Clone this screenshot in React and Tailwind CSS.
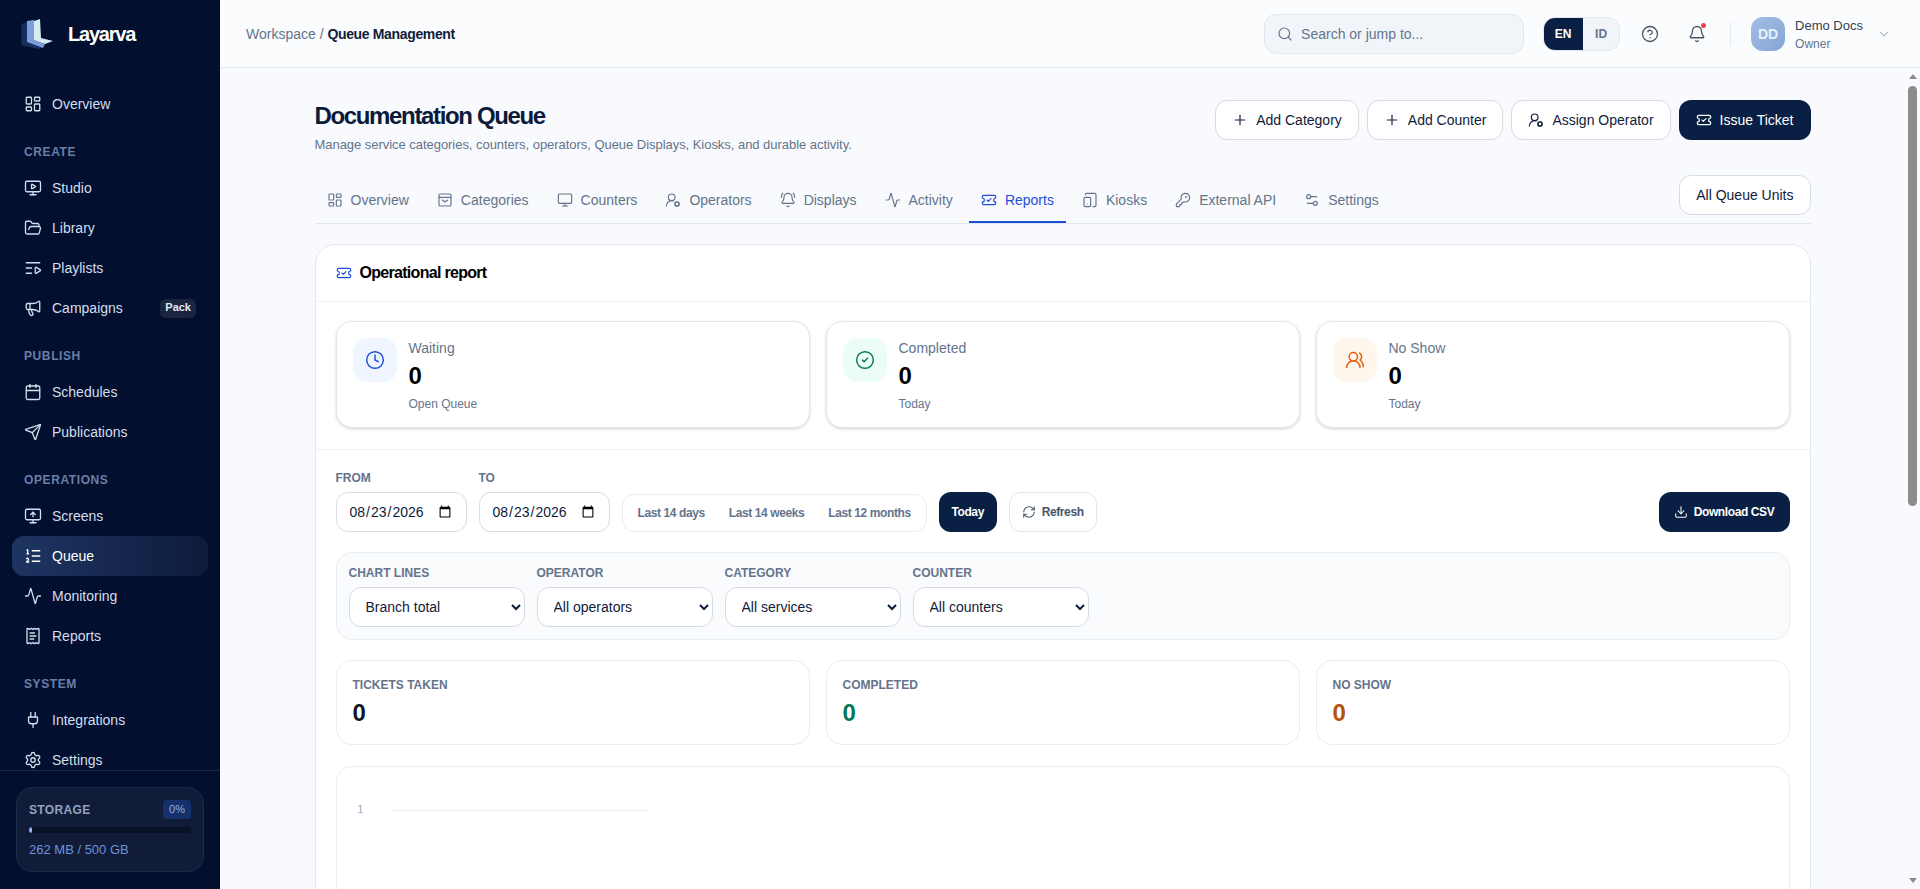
import React from 'react';
import {
  LayoutDashboard, MonitorPlay, FolderOpen, ListVideo, Megaphone, Calendar, Send, MonitorUp, ListOrdered,
  Activity, ReceiptText, Plug, Settings, Search, CircleHelp, Bell, ChevronDown, Plus, UserRoundCog, TicketCheck,
  Monitor, BellRing, TabletSmartphone, KeyRound, Settings2, Clock, CircleCheck, UsersRound, RefreshCw, Download,
} from 'lucide-react';

const CategoriesIcon = (props) => (
  <svg viewBox="0 0 24 24" fill="none" stroke="currentColor" strokeWidth="2" strokeLinecap="round" strokeLinejoin="round" {...props}>
    <rect x="3" y="3" width="18" height="18" rx="2" />
    <path d="M3 8h18" />
    <path d="M8 12l4 3 4-3" />
  </svg>
);

const navGroups = [
  { items: [{ label: 'Overview', icon: LayoutDashboard }] },
  {
    title: 'CREATE',
    items: [
      { label: 'Studio', icon: MonitorPlay },
      { label: 'Library', icon: FolderOpen },
      { label: 'Playlists', icon: ListVideo },
      { label: 'Campaigns', icon: Megaphone, badge: 'Pack' },
    ],
  },
  {
    title: 'PUBLISH',
    items: [
      { label: 'Schedules', icon: Calendar },
      { label: 'Publications', icon: Send },
    ],
  },
  {
    title: 'OPERATIONS',
    items: [
      { label: 'Screens', icon: MonitorUp },
      { label: 'Queue', icon: ListOrdered, active: true },
      { label: 'Monitoring', icon: Activity },
      { label: 'Reports', icon: ReceiptText },
    ],
  },
  {
    title: 'SYSTEM',
    items: [
      { label: 'Integrations', icon: Plug },
      { label: 'Settings', icon: Settings },
    ],
  },
];

const tabs = [
  { label: 'Overview', icon: LayoutDashboard },
  { label: 'Categories', icon: CategoriesIcon },
  { label: 'Counters', icon: Monitor },
  { label: 'Operators', icon: UserRoundCog },
  { label: 'Displays', icon: BellRing },
  { label: 'Activity', icon: Activity },
  { label: 'Reports', icon: TicketCheck, active: true },
  { label: 'Kiosks', icon: TabletSmartphone },
  { label: 'External API', icon: KeyRound },
  { label: 'Settings', icon: Settings2 },
];

const Logo = () => (
  <svg viewBox="0 0 32 32" className="w-8 h-8 shrink-0">
    <polygon points="0.5,6 6,4 6,24 22,30 17,31 0.5,27" fill="#15305f" />
    <polygon points="6,3 13,2 13,22 24,26 22,30 6,24" fill="#7c9fd9" />
    <polygon points="13,3 19,1 20,20 32,23 24,26 13,22" fill="#d6ecf3" />
  </svg>
);

const Sidebar = () => (
  <aside className="w-[220px] shrink-0 h-full flex flex-col bg-[#020f2e]">
    <div className="h-[68px] shrink-0 flex items-center gap-[15px] pl-[21px]">
      <Logo />
      <span className="text-[20px] font-bold tracking-[-1.2px] text-white">Layarva</span>
    </div>
    <nav className="flex-1 min-h-0 overflow-hidden px-3 pt-4 flex flex-col gap-5">
      {navGroups.map((group, i) => (
        <div key={i}>
          {group.title && (
            <div className="h-4 mb-2 px-3 text-xs leading-4 font-bold tracking-[0.05em] text-[#6a7fa8]">{group.title}</div>
          )}
          {group.items.map((item) => (
            <div
              key={item.label}
              className={`h-10 px-3 flex items-center gap-2.5 rounded-xl text-sm ${
                item.active ? 'bg-gradient-to-r from-[#1e3563] to-[#0e1b3c] text-white' : 'text-[#d3deef]'
              }`}
            >
              <item.icon className="w-[18px] h-[18px] shrink-0" strokeWidth={1.75} />
              <span className="flex-1">{item.label}</span>
              {item.badge && (
                <span className="h-[19px] px-[5px] flex items-center rounded-md bg-[#1b2540] text-[11px] font-bold text-[#e2e8f0]">{item.badge}</span>
              )}
            </div>
          ))}
        </div>
      ))}
    </nav>
    <div className="shrink-0 border-t border-[#1c2a48] px-4 pt-4 pb-[17px]">
      <div className="h-[85px] rounded-2xl border border-[#1c2a4a] bg-[#101c38] px-3 pt-3">
        <div className="flex items-center justify-between">
          <span className="text-xs font-bold tracking-[0.03em] text-[#94a3bd]">STORAGE</span>
          <span className="h-[19px] px-1.5 flex items-center rounded bg-[#15306b] text-[11px] text-[#8fb0ee]">0%</span>
        </div>
        <div className="mt-2 h-1.5 rounded-full bg-[#0a1226] overflow-hidden">
          <div className="h-full w-[3px] rounded-full bg-[#8fb0ee]" />
        </div>
        <div className="mt-[9px] text-[13px] leading-4 text-[#6f93d9]">262 MB / 500 GB</div>
      </div>
    </div>
  </aside>
);

const Topbar = () => (
  <header className="h-[68px] shrink-0 border-b border-[#e2e8f0] bg-[#fbfcfe] flex items-center pl-[26px] pr-[29px]">
    <div className="text-sm text-[#64748b]">
      Workspace / <span className="font-semibold text-[#0f1c3a] tracking-tight">Queue Management</span>
    </div>
    <div className="ml-auto w-[260px] h-10 rounded-xl border border-[#e2e8f0] bg-[#f1f5f9] flex items-center gap-2 px-3 text-sm text-[#64748b]">
      <Search className="w-4 h-4 shrink-0" strokeWidth={1.75} />
      Search or jump to...
    </div>
    <div className="ml-[19px] h-[34px] flex rounded-xl overflow-hidden border border-[#e2e8f0] bg-[#f1f5f9] text-xs font-bold">
      <span className="w-10 -my-px -ml-px flex items-center justify-center bg-[#0a1f44] text-white">EN</span>
      <span className="w-9 flex items-center justify-center text-[#64748b]">ID</span>
    </div>
    <CircleHelp className="ml-[21px] w-[18px] h-[18px] text-[#475569]" strokeWidth={1.75} />
    <div className="relative ml-[29px]">
      <Bell className="w-[18px] h-[18px] text-[#475569]" strokeWidth={1.75} />
      <span className="absolute -top-0.5 right-0 w-[5px] h-[5px] rounded-full bg-[#ef4444]" />
    </div>
    <div className="ml-6 w-px h-6 bg-[#e2e8f0]" />
    <div className="ml-5 w-[34px] h-[34px] rounded-xl bg-gradient-to-br from-[#a3bde3] to-[#85a6d6] flex items-center justify-center text-sm font-bold text-[#e8f0fa]">DD</div>
    <div className="ml-2.5">
      <div className="text-[13px] leading-5 font-medium text-[#334155]">Demo Docs</div>
      <div className="text-xs leading-4 font-medium text-[#64748b]">Owner</div>
    </div>
    <ChevronDown className="ml-3.5 w-3.5 h-3.5 text-[#94a3b8]" strokeWidth={1.75} />
  </header>
);

const OutlineButton = ({ icon: Icon, label }) => (
  <button className="h-10 px-4 flex items-center gap-2 rounded-xl border border-[#d5dce6] bg-white text-sm text-[#0f1c3a]">
    {Icon && <Icon className="w-4 h-4" strokeWidth={1.75} />}
    {label}
  </button>
);

const StatCard = ({ icon: Icon, box, color, label, sub }) => (
  <div className="h-[107px] rounded-2xl border border-[#e2e8f0] bg-white shadow-[0_1px_3px_rgba(15,23,42,0.18)] p-4 flex gap-3">
    <div className={`w-11 h-11 rounded-[14px] shrink-0 flex items-center justify-center ${box}`}>
      <Icon className={`w-5 h-5 ${color}`} strokeWidth={1.75} />
    </div>
    <div>
      <div className="text-sm leading-5 text-[#64748b]">{label}</div>
      <div className="text-2xl leading-8 font-bold text-black mt-[2px]">0</div>
      <div className="text-xs leading-4 text-[#64748b] mt-1">{sub}</div>
    </div>
  </div>
);

const Field = ({ label, className, children }) => (
  <label className={`block ${className || ''}`}>
    <span className="block text-xs leading-4 font-semibold text-[#64748b] mb-1.5">{label}</span>
    {children}
  </label>
);

const selectClass = 'block w-[176px] h-10 rounded-xl border border-[#d5dce6] bg-white px-3 text-sm text-[#0f1c3a]';

const MiniStat = ({ label, color }) => (
  <div className="h-[85px] rounded-2xl border border-[#e8edf3] bg-white px-4 pt-4">
    <div className="text-xs leading-4 font-semibold text-[#64748b]">{label}</div>
    <div className={`mt-1 text-2xl leading-8 font-semibold ${color}`}>0</div>
  </div>
);

// the window scrollbar in the reference, kept in flow to the right of the page
const ScrollRail = () => (
  <div className="w-[15px] shrink-0 flex flex-col items-center bg-[#f9fafd]">
    <svg viewBox="0 0 8 5" className="mt-[6px] w-2 h-[5px] text-[#8a8a8a]"><path d="M4 0l4 5H0z" fill="currentColor" /></svg>
    <div className="mt-[7px] w-[9px] h-[420px] rounded-full bg-[#8c8c8c]" />
    <svg viewBox="0 0 8 5" className="mt-auto mb-[6px] w-2 h-[5px] text-[#8a8a8a]"><path d="M0 0h8L4 5z" fill="currentColor" /></svg>
  </div>
);

const App = () => (
  <div className="h-screen w-full flex overflow-hidden font-['Liberation_Sans',Arial,sans-serif] bg-[#f8fafd]">
    <Sidebar />
    <div className="flex-1 min-w-0 flex flex-col">
      <Topbar />
      <div className="flex-1 min-h-0 flex">
        <main className="flex-1 min-w-0 overflow-hidden">
          <div className="w-[1496px] mx-auto pt-8 pb-8">
            <div className="flex items-start justify-between h-[55px]">
              <div>
                <h1 className="text-2xl leading-8 font-bold tracking-[-1.35px] text-[#0b1a3a]">Documentation Queue</h1>
                <p className="mt-[3px] text-[13px] leading-5 tracking-[-0.04px] text-[#64748b]">Manage service categories, counters, operators, Queue Displays, Kiosks, and durable activity.</p>
              </div>
              <div className="flex gap-2">
                <OutlineButton icon={Plus} label="Add Category" />
                <OutlineButton icon={Plus} label="Add Counter" />
                <OutlineButton icon={UserRoundCog} label="Assign Operator" />
                <button className="h-10 px-[17px] flex items-center gap-2 rounded-xl bg-[#0a1f44] text-sm text-white">
                  <TicketCheck className="w-4 h-4" strokeWidth={1.75} />
                  Issue Ticket
                </button>
              </div>
            </div>

            <div className="mt-5 border-b border-[#e2e8f0] pb-2 flex items-end justify-between">
              <div className="flex gap-1 -mb-2">
                {tabs.map((tab) => (
                  <div
                    key={tab.label}
                    className={`h-[46px] pt-[2px] px-3 flex items-center gap-2 border-b-2 text-sm ${
                      tab.active ? 'border-[#1d4ed8] text-[#1d4ed8]' : 'border-transparent text-[#64748b]'
                    }`}
                  >
                    <tab.icon className="w-4 h-4" strokeWidth={1.75} />
                    {tab.label}
                  </div>
                ))}
              </div>
              <OutlineButton label="All Queue Units" />
            </div>

            <section className="mt-5 rounded-[20px] border border-[#e2e8f0] bg-white">
              <div className="h-[57px] border-b border-[#eef2f6] px-5 flex items-center gap-2">
                <TicketCheck className="w-4 h-4 text-[#1d4ed8]" strokeWidth={1.75} />
                <h2 className="text-base font-semibold tracking-[-0.7px] text-black">Operational report</h2>
              </div>

              <div className="px-5 pt-[19px] pb-[21px] border-b border-[#eef2f6] grid grid-cols-3 gap-4">
                <StatCard icon={Clock} box="bg-[#eff6ff]" color="text-[#1d4ed8]" label="Waiting" sub="Open Queue" />
                <StatCard icon={CircleCheck} box="bg-[#ecfdf5]" color="text-[#047857]" label="Completed" sub="Today" />
                <StatCard icon={UsersRound} box="bg-[#fff7ed]" color="text-[#ea580c]" label="No Show" sub="Today" />
              </div>

              <div className="p-5">
                <div className="flex items-end">
                  <Field label="FROM">
                    <input type="date" defaultValue="2026-08-23" className="block w-[131px] h-10 rounded-xl border border-[#d5dce6] bg-white px-3 text-sm text-[#0f1c3a]" />
                  </Field>
                  <Field label="TO" className="ml-3">
                    <input type="date" defaultValue="2026-08-23" className="block w-[131px] h-10 rounded-xl border border-[#d5dce6] bg-white px-3 text-sm text-[#0f1c3a]" />
                  </Field>
                  <div className="ml-3 h-[38px] flex items-center rounded-xl border border-[#e8edf3] bg-white px-[3px] text-xs font-semibold tracking-[-0.4px] text-[#64748b]">
                    <span className="px-3">Last 14 days</span>
                    <span className="px-3">Last 14 weeks</span>
                    <span className="px-3">Last 12 months</span>
                  </div>
                  <button className="ml-3 h-10 w-[58px] rounded-xl bg-[#0a1f44] text-xs font-bold tracking-[-0.4px] text-white">Today</button>
                  <button className="ml-3 h-10 px-3 flex items-center gap-1.5 rounded-xl border border-[#e2e8f0] bg-white text-xs font-semibold tracking-[-0.4px] text-[#475569]">
                    <RefreshCw className="w-3.5 h-3.5" strokeWidth={1.75} />
                    Refresh
                  </button>
                  <button className="ml-auto h-10 w-[131px] flex items-center justify-center gap-1.5 rounded-xl bg-[#0a1f44] text-xs font-bold tracking-[-0.4px] text-white">
                    <Download className="w-3.5 h-3.5" strokeWidth={1.75} />
                    Download CSV
                  </button>
                </div>

                <div className="mt-5 rounded-2xl border border-[#e8edf3] bg-[#f9fbfd] p-3 flex gap-3">
                  <Field label="CHART LINES">
                    <select className={selectClass} defaultValue="Branch total"><option>Branch total</option></select>
                  </Field>
                  <Field label="OPERATOR">
                    <select className={selectClass} defaultValue="All operators"><option>All operators</option></select>
                  </Field>
                  <Field label="CATEGORY">
                    <select className={selectClass} defaultValue="All services"><option>All services</option></select>
                  </Field>
                  <Field label="COUNTER">
                    <select className={selectClass} defaultValue="All counters"><option>All counters</option></select>
                  </Field>
                </div>

                <div className="mt-5 grid grid-cols-3 gap-4">
                  <MiniStat label="TICKETS TAKEN" color="text-[#0f172a]" />
                  <MiniStat label="COMPLETED" color="text-[#047857]" />
                  <MiniStat label="NO SHOW" color="text-[#b45309]" />
                </div>

                <div className="mt-[21px] h-[420px] rounded-2xl border border-[#e8edf3] bg-white pt-[37px] pl-[21px]">
                  <div className="flex items-center">
                    <span className="w-[34px] text-[10px] leading-3 text-[#94a3b8]">1</span>
                    <div className="w-[257px] h-px bg-[#e8edf3]" />
                  </div>
                </div>
              </div>
            </section>
          </div>
        </main>
        <ScrollRail />
      </div>
    </div>
  </div>
);

export default App;
